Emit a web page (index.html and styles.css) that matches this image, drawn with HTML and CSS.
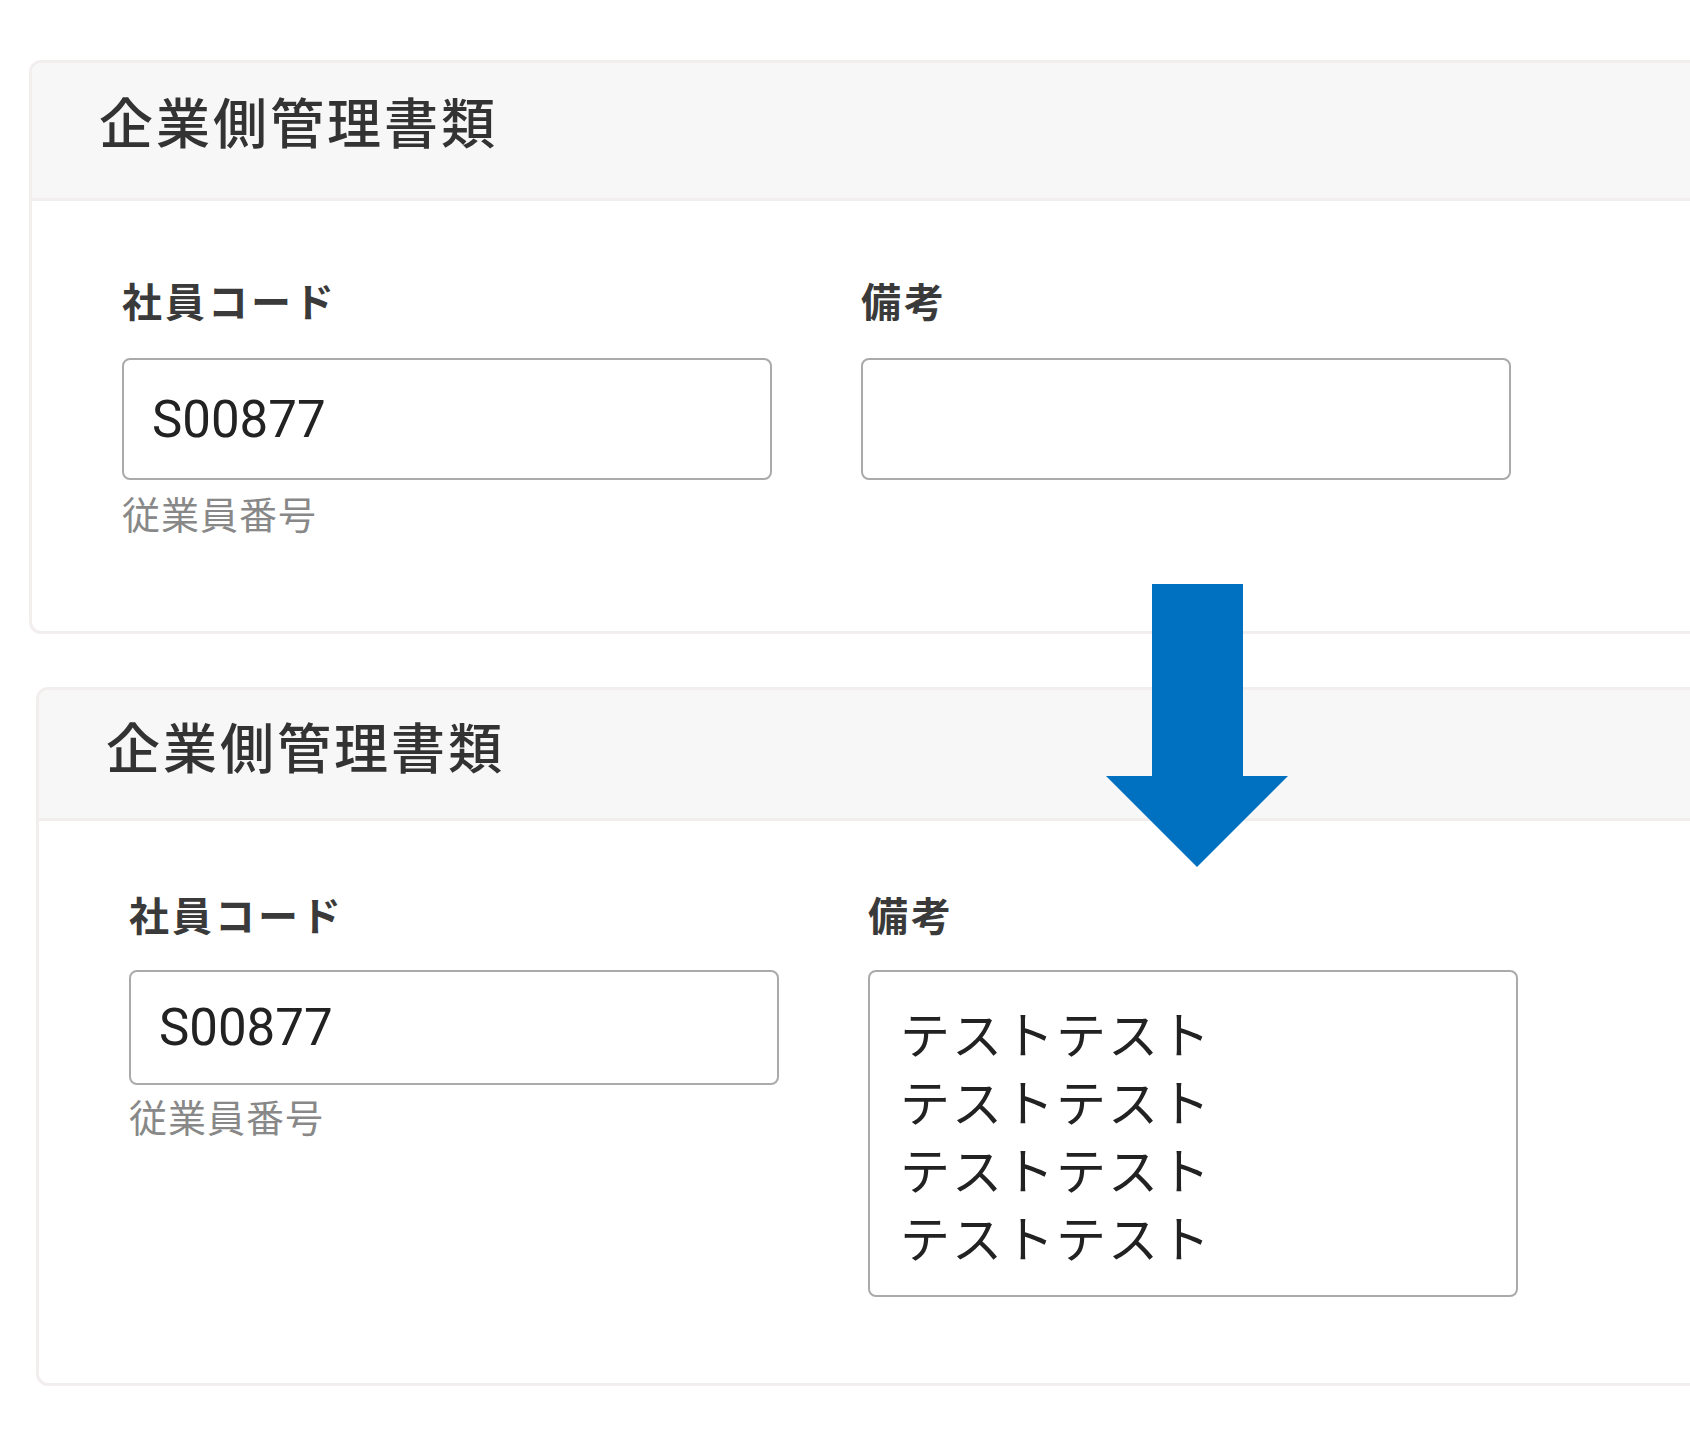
FILE: index.html
```html
<!DOCTYPE html>
<html lang="ja">
<head>
    <meta charset="UTF-8">
    <meta name="viewport" content="width=device-width, initial-scale=1.0">
    <title>企業側管理書類</title>
    <link rel="stylesheet" href="styles.css">
</head>
<body>
    <div class="page">
        <div class="card">
            <div class="card-header">
                <h2>企業側管理書類</h2>
            </div>
            <div class="card-body">
                <div class="field">
                    <label>社員コード</label>
                    <input type="text" value="S00877" readonly>
                    <p class="help">従業員番号</p>
                </div>
                <div class="field">
                    <label>備考</label>
                    <input type="text" value="" readonly>
                </div>
            </div>
        </div>

        <div class="card after">
            <div class="card-header">
                <h2>企業側管理書類</h2>
            </div>
            <div class="card-body">
                <div class="field">
                    <label>社員コード</label>
                    <input type="text" value="S00877" readonly>
                    <p class="help">従業員番号</p>
                </div>
                <div class="field">
                    <label>備考</label>
                    <textarea readonly>テストテスト
テストテスト
テストテスト
テストテスト</textarea>
                </div>
            </div>
        </div>

        <!-- before / after arrow -->
        <svg class="arrow" width="182" height="283" viewBox="0 0 182 283">
            <polygon points="46,0 137,0 137,192 182,192 91,283 0,192 46,192" fill="#0070c0"/>
        </svg>
    </div>
</body>
</html>
```

FILE: styles.css
```css
html, body {
    overflow: hidden;
}
body {
    margin: 0;
    background-color: #fff;
    font-family: "Noto Sans CJK JP", "Noto Sans", sans-serif;
    color: #333;
}
.page {
    position: relative;
    padding: 60px 0 0 29px;
}
.card {
    width: 1720px;
    border: 3px solid #f3eeee;
    border-radius: 12px;
    background-color: #fff;
    overflow: hidden;
}
.card-header {
    background-color: #f7f7f7;
    border-bottom: 3px solid #f3eeee;
    padding: 17px 0 37px 67px;
}
.card-header h2 {
    margin: 0;
    font-size: 54px;
    line-height: 81px;
    font-weight: 500;
    letter-spacing: 3px;
    color: #333;
}
.card-body {
    display: grid;
    grid-template-columns: 650px 650px;
    column-gap: 89px;
    align-items: start;
    padding: 69px 0 91px 90px;
}
.field {
    display: flex;
    flex-direction: column;
}
.field label {
    font-size: 40px;
    line-height: 60px;
    font-weight: 700;
    letter-spacing: 3px;
    color: #3a3a3a;
    margin-bottom: 28px;
}
.field input,
.field textarea {
    box-sizing: border-box;
    width: 100%;
    border: 2px solid #aaa;
    border-radius: 8px;
    background-color: #fff;
    color: #222;
    outline: none;
}
.field input {
    height: 122px;
    padding: 0 28px;
    font-family: Roboto, "Noto Sans CJK JP", sans-serif;
    font-size: 51px;
}
.field textarea {
    height: 327px;
    padding: 26px 30px;
    font-family: "Noto Sans CJK JP", sans-serif;
    font-size: 50px;
    line-height: 68px;
    letter-spacing: 2px;
    resize: none;
    overflow: hidden;
}
.help {
    margin: 6px 0 0;
    font-size: 38px;
    line-height: 54px;
    letter-spacing: 1px;
    color: #888;
}

/* second card: slightly tighter spacing */
.card.after {
    margin: 53px 0 0 7px;
}
.card.after .card-header {
    padding: 15px 0 32px 67px;
}
.card.after .card-body {
    padding: 63px 0 86px 90px;
}
.card.after .field label {
    margin-bottom: 26px;
}
.card.after .field input {
    height: 115px;
}
.card.after .help {
    margin-top: 4px;
}

.arrow {
    position: absolute;
    left: 1106px;
    top: 584px;
}
```
